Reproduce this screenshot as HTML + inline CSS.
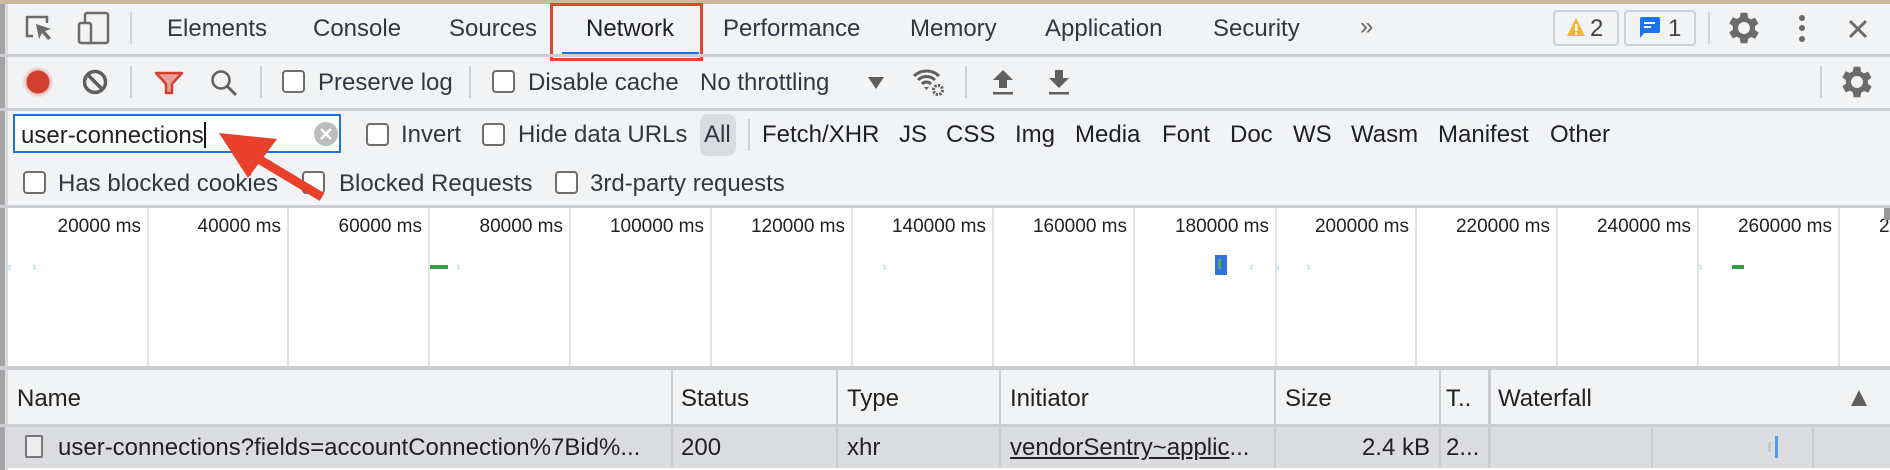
<!DOCTYPE html>
<html><head><meta charset="utf-8"><style>
*{margin:0;padding:0;box-sizing:border-box}
body{width:1890px;height:470px;overflow:hidden;background:#f1f3f4;font-family:"Liberation Sans",Arial,sans-serif;color:#303942;position:relative}
.a{position:absolute;white-space:nowrap}
.t{font-size:24px;line-height:24px}
.s{font-size:19px;line-height:19px;color:#222}
.hl{position:absolute;height:3px;background:#cbcdd1;left:0;width:1890px}
.vs{position:absolute;width:2px;background:#cfd1d4}
.cb{position:absolute;width:23px;height:23px;border:2px solid #6e6e6e;border-radius:4px;background:#fff}
.gl{position:absolute;top:208px;height:160px;width:2px;background:#e3e3e3}
.cl{position:absolute;width:2px;background:#cbcdd1}
</style></head><body>
<div class="a" style="left:0;top:0;width:1890px;height:4px;background:#cdb99e"></div>
<div class="a" style="left:0;top:4px;width:5px;height:466px;background:#a3a3a3"></div>
<div class="a" style="left:5px;top:4px;width:3px;height:466px;background:#d8dadd"></div>

<svg class="a" style="left:24px;top:14px" width="32" height="30" viewBox="0 0 32 30"><path d="M9 22H3V3h20v6" fill="none" stroke="#6b6b6b" stroke-width="2.5"/><path d="M12 10l15 5-6 2 6 7-3 2-6-7-3 6z" fill="#6b6b6b"/></svg>
<svg class="a" style="left:77px;top:11px" width="34" height="34" viewBox="0 0 34 34"><rect x="8" y="2" width="23" height="30" rx="2" fill="none" stroke="#6b6b6b" stroke-width="2.5"/><rect x="2" y="12" width="12" height="20" rx="2" fill="#f1f3f4" stroke="#6b6b6b" stroke-width="2.5"/></svg>
<div class="vs" style="left:130px;top:12px;height:32px"></div>
<div class="a t" style="left:167px;top:17px">Elements</div>
<div class="a t" style="left:313px;top:17px">Console</div>
<div class="a t" style="left:449px;top:17px">Sources</div>
<div class="a t" style="left:586px;top:17px;color:#202124">Network</div>
<div class="a" style="left:562px;top:52px;width:137px;height:3px;background:#1a73e8"></div>
<div class="a" style="left:550px;top:3px;width:153px;height:58px;border:3px solid #e8432d"></div>
<div class="a t" style="left:723px;top:17px">Performance</div>
<div class="a t" style="left:910px;top:17px">Memory</div>
<div class="a t" style="left:1045px;top:17px">Application</div>
<div class="a t" style="left:1213px;top:17px">Security</div>
<div class="a t" style="left:1360px;top:15px;color:#666">»</div>
<div class="a" style="left:1553px;top:10px;width:66px;height:36px;border:2px solid #cfd1d4;border-radius:4px"></div>
<svg class="a" style="left:1566px;top:17px" width="20" height="20" viewBox="0 0 20 20"><path d="M10 1L19 19H1z" fill="#f2b531"/><rect x="9" y="7" width="2.4" height="7" fill="#fff"/><rect x="9" y="15.5" width="2.4" height="2.2" fill="#fff"/></svg>
<div class="a t" style="left:1590px;top:17px;color:#444">2</div>
<div class="a" style="left:1624px;top:10px;width:72px;height:36px;border:2px solid #cfd1d4;border-radius:4px"></div>
<svg class="a" style="left:1638px;top:15px" width="24" height="25" viewBox="0 0 24 25"><path d="M4 2h16a2 2 0 0 1 2 2v12a2 2 0 0 1-2 2H6l-4 5V4a2 2 0 0 1 2-2z" fill="#1a73e8"/><rect x="6" y="7" width="11" height="2" fill="#fff"/><rect x="6" y="11" width="7" height="2" fill="#fff"/></svg>
<div class="a t" style="left:1668px;top:17px;color:#444">1</div>
<div class="vs" style="left:1708px;top:12px;height:32px"></div>
<svg class="a" style="left:1727px;top:11px" width="34" height="34" viewBox="2 2 20 20"><path fill="#6b6b6b" d="M19.4 13a7.5 7.5 0 0 0 0-2l2.1-1.6-2-3.5-2.5 1a7 7 0 0 0-1.7-1L15 3h-4l-.4 2.7a7 7 0 0 0-1.7 1l-2.5-1-2 3.5L6.5 11a7.5 7.5 0 0 0 0 2l-2.1 1.6 2 3.5 2.5-1a7 7 0 0 0 1.7 1L11 21h4l.4-2.7a7 7 0 0 0 1.7-1l2.5 1 2-3.5zM13 15.5a3.5 3.5 0 1 1 0-7 3.5 3.5 0 0 1 0 7z" transform="translate(-1 0)"/></svg>
<svg class="a" style="left:1796px;top:14px" width="12" height="30"><circle cx="6" cy="4" r="3" fill="#6b6b6b"/><circle cx="6" cy="14" r="3" fill="#6b6b6b"/><circle cx="6" cy="25" r="3" fill="#6b6b6b"/></svg>
<svg class="a" style="left:1848px;top:19px" width="20" height="20"><path d="M2 2L18 18M18 2L2 18" stroke="#6b6b6b" stroke-width="3"/></svg>
<div class="hl" style="top:54px"></div>

<div class="a" style="left:22px;top:66px;width:32px;height:32px;border-radius:50%;background:radial-gradient(circle,#d33f2f 0 11px,rgba(211,63,47,.25) 12px,rgba(211,63,47,0) 16px)"></div>
<svg class="a" style="left:82px;top:69px" width="26" height="26"><circle cx="13" cy="13" r="10.5" fill="none" stroke="#5f5f5f" stroke-width="3.5"/><path d="M6 6L20 20" stroke="#5f5f5f" stroke-width="3.5"/></svg>
<div class="vs" style="left:130px;top:66px;height:32px"></div>
<svg class="a" style="left:154px;top:71px" width="30" height="24"><path d="M2 2h26L18 13v9h-6v-9z" fill="#e8a19a" stroke="#d33f2f" stroke-width="2.5" stroke-linejoin="round"/></svg>
<svg class="a" style="left:209px;top:68px" width="30" height="30"><circle cx="12" cy="12" r="8.5" fill="none" stroke="#5f5f5f" stroke-width="2.5"/><path d="M18 18l9 9" stroke="#5f5f5f" stroke-width="2.8"/></svg>
<div class="vs" style="left:260px;top:66px;height:32px"></div>
<div class="cb" style="left:282px;top:70px"></div>
<div class="a t" style="left:318px;top:71px">Preserve log</div>
<div class="vs" style="left:469px;top:66px;height:32px"></div>
<div class="cb" style="left:492px;top:70px"></div>
<div class="a t" style="left:528px;top:71px">Disable cache</div>
<div class="a t" style="left:700px;top:71px">No throttling</div>
<svg class="a" style="left:867px;top:76px" width="18" height="14"><path d="M1 1h16L9 13z" fill="#5f5f5f"/></svg>
<svg class="a" style="left:912px;top:67px" width="34" height="30" viewBox="0 0 34 30"><path d="M2 9a18 18 0 0 1 25 0M6 13a12 12 0 0 1 17 0M10 17a6 6 0 0 1 9 0" fill="none" stroke="#5f5f5f" stroke-width="3"/><path d="M12 20h5l-2.5 3z" fill="#5f5f5f"/><circle cx="26" cy="23" r="4.5" fill="none" stroke="#5f5f5f" stroke-width="3" stroke-dasharray="2.2 1.3"/></svg>
<div class="vs" style="left:965px;top:66px;height:32px"></div>
<svg class="a" style="left:991px;top:68px" width="24" height="28"><path d="M12 2L22 12h-6v8H8v-8H2z" fill="#5f5f5f"/><rect x="2" y="24" width="20" height="2.5" fill="#5f5f5f"/></svg>
<svg class="a" style="left:1047px;top:68px" width="24" height="28"><path d="M12 20L22 10h-6V2H8v8H2z" fill="#5f5f5f"/><rect x="2" y="24" width="20" height="2.5" fill="#5f5f5f"/></svg>
<div class="vs" style="left:1820px;top:66px;height:32px"></div>
<svg class="a" style="left:1840px;top:65px" width="34" height="34" viewBox="2 2 20 20"><path fill="#6b6b6b" d="M19.4 13a7.5 7.5 0 0 0 0-2l2.1-1.6-2-3.5-2.5 1a7 7 0 0 0-1.7-1L15 3h-4l-.4 2.7a7 7 0 0 0-1.7 1l-2.5-1-2 3.5L6.5 11a7.5 7.5 0 0 0 0 2l-2.1 1.6 2 3.5 2.5-1a7 7 0 0 0 1.7 1L11 21h4l.4-2.7a7 7 0 0 0 1.7-1l2.5 1 2-3.5zM13 15.5a3.5 3.5 0 1 1 0-7 3.5 3.5 0 0 1 0 7z" transform="translate(-1 0)"/></svg>
<div class="hl" style="top:108px"></div>

<div class="a" style="left:13px;top:114px;width:328px;height:39px;border:2px solid #1a73e8;background:#fff"></div>
<div class="a t" style="left:21px;top:122px;color:#222">user-connections<span style="display:inline-block;width:2px;height:26px;background:#111;vertical-align:-5px"></span></div>
<svg class="a" style="left:313px;top:121px" width="26" height="26"><circle cx="13" cy="13" r="12" fill="#bdbdbd"/><path d="M8 8l10 10M18 8L8 18" stroke="#fff" stroke-width="2.6"/></svg>
<div class="cb" style="left:366px;top:123px"></div>
<div class="a t" style="left:401px;top:123px">Invert</div>
<div class="cb" style="left:482px;top:123px"></div>
<div class="a t" style="left:518px;top:123px">Hide data URLs</div>
<div class="a" style="left:700px;top:114px;width:36px;height:42px;border-radius:8px;background:#dadce0"></div>
<div class="a t" style="left:704px;top:123px">All</div>
<div class="vs" style="left:748px;top:119px;height:32px"></div>
<div class="a t" style="left:762px;top:123px;color:#202124">Fetch/XHR</div>
<div class="a t" style="left:899px;top:123px;color:#202124">JS</div>
<div class="a t" style="left:946px;top:123px;color:#202124">CSS</div>
<div class="a t" style="left:1015px;top:123px;color:#202124">Img</div>
<div class="a t" style="left:1075px;top:123px;color:#202124">Media</div>
<div class="a t" style="left:1162px;top:123px;color:#202124">Font</div>
<div class="a t" style="left:1230px;top:123px;color:#202124">Doc</div>
<div class="a t" style="left:1293px;top:123px;color:#202124">WS</div>
<div class="a t" style="left:1351px;top:123px;color:#202124">Wasm</div>
<div class="a t" style="left:1438px;top:123px;color:#202124">Manifest</div>
<div class="a t" style="left:1550px;top:123px;color:#202124">Other</div>

<div class="cb" style="left:23px;top:171px"></div>
<div class="a t" style="left:58px;top:172px">Has blocked cookies</div>
<div class="cb" style="left:302px;top:171px"></div>
<div class="a t" style="left:339px;top:172px">Blocked Requests</div>
<div class="cb" style="left:555px;top:171px"></div>
<div class="a t" style="left:590px;top:172px">3rd-party requests</div>
<div class="hl" style="top:205px"></div>

<div class="a" style="left:8px;top:208px;width:1882px;height:160px;background:#fff"></div>
<div class="gl" style="left:147px"></div><div class="gl" style="left:287px"></div><div class="gl" style="left:428px"></div><div class="gl" style="left:569px"></div><div class="gl" style="left:710px"></div><div class="gl" style="left:851px"></div><div class="gl" style="left:992px"></div><div class="gl" style="left:1133px"></div><div class="gl" style="left:1275px"></div><div class="gl" style="left:1415px"></div><div class="gl" style="left:1556px"></div><div class="gl" style="left:1697px"></div><div class="gl" style="left:1838px"></div>
<div class="a s" style="right:1749px;top:217px">20000 ms</div>
<div class="a s" style="right:1609px;top:217px">40000 ms</div>
<div class="a s" style="right:1468px;top:217px">60000 ms</div>
<div class="a s" style="right:1327px;top:217px">80000 ms</div>
<div class="a s" style="right:1186px;top:217px">100000 ms</div>
<div class="a s" style="right:1045px;top:217px">120000 ms</div>
<div class="a s" style="right:904px;top:217px">140000 ms</div>
<div class="a s" style="right:763px;top:217px">160000 ms</div>
<div class="a s" style="right:621px;top:217px">180000 ms</div>
<div class="a s" style="right:481px;top:217px">200000 ms</div>
<div class="a s" style="right:340px;top:217px">220000 ms</div>
<div class="a s" style="right:199px;top:217px">240000 ms</div>
<div class="a s" style="right:58px;top:217px">260000 ms</div>
<div class="a s" style="left:1879px;top:217px">2</div>
<div class="a" style="left:1884px;top:208px;width:6px;height:12px;background:#999"></div>
<div class="a" style="left:8px;top:265px;width:3px;height:5px;background:#cdeef0"></div>
<div class="a" style="left:33px;top:265px;width:3px;height:5px;background:#cdeef0"></div>
<div class="a" style="left:430px;top:265px;width:18px;height:4px;background:#3a9d46"></div>
<div class="a" style="left:457px;top:265px;width:3px;height:5px;background:#cdeef0"></div>
<div class="a" style="left:883px;top:265px;width:3px;height:5px;background:#cdeef0"></div>
<div class="a" style="left:1215px;top:255px;width:12px;height:20px;background:#2f72de"></div>
<div class="a" style="left:1218px;top:259px;width:3px;height:10px;background:#4caf50"></div>
<div class="a" style="left:1250px;top:265px;width:3px;height:5px;background:#cdeef0"></div>
<div class="a" style="left:1276px;top:265px;width:3px;height:5px;background:#cdeef0"></div>
<div class="a" style="left:1307px;top:265px;width:3px;height:5px;background:#cdeef0"></div>
<div class="a" style="left:1699px;top:265px;width:3px;height:5px;background:#cdeef0"></div>
<div class="a" style="left:1732px;top:265px;width:12px;height:4px;background:#3a9d46"></div>
<div class="hl" style="top:366px;height:4px"></div>

<div class="a" style="left:8px;top:370px;width:1882px;height:54px;background:#f1f3f4"></div>
<div class="cl" style="left:671px;top:370px;height:100px"></div>
<div class="cl" style="left:836px;top:370px;height:100px"></div>
<div class="cl" style="left:999px;top:370px;height:100px"></div>
<div class="cl" style="left:1274px;top:370px;height:100px"></div>
<div class="cl" style="left:1439px;top:370px;height:100px"></div>
<div class="cl" style="left:1488px;top:370px;height:100px;width:3px"></div>
<div class="a t" style="left:17px;top:387px;color:#222">Name</div>
<div class="a t" style="left:681px;top:387px;color:#222">Status</div>
<div class="a t" style="left:847px;top:387px;color:#222">Type</div>
<div class="a t" style="left:1010px;top:387px;color:#222">Initiator</div>
<div class="a t" style="left:1285px;top:387px;color:#222">Size</div>
<div class="a t" style="left:1446px;top:387px;color:#222">T..</div>
<div class="a t" style="left:1498px;top:387px;color:#222">Waterfall</div>
<svg class="a" style="left:1850px;top:389px" width="18" height="18"><path d="M9 1L17 17H1z" fill="#5f5f5f"/></svg>
<div class="hl" style="top:424px"></div>

<div class="a" style="left:8px;top:427px;width:1882px;height:41px;background:#dadce0"></div>
<div class="cl" style="left:671px;top:427px;height:43px"></div>
<div class="cl" style="left:836px;top:427px;height:43px"></div>
<div class="cl" style="left:999px;top:427px;height:43px"></div>
<div class="cl" style="left:1274px;top:427px;height:43px"></div>
<div class="cl" style="left:1439px;top:427px;height:43px"></div>
<div class="cl" style="left:1488px;top:427px;height:43px;width:3px"></div>
<div class="cl" style="left:1651px;top:427px;height:41px"></div>
<div class="cl" style="left:1812px;top:427px;height:41px"></div>
<div class="a" style="left:25px;top:435px;width:18px;height:23px;border:2px solid #777;border-radius:2px;background:#ececec"></div>
<div class="a t" style="left:58px;top:436px;color:#222">user-connections?fields=accountConnection%7Bid%...</div>
<div class="a t" style="left:681px;top:436px;color:#222">200</div>
<div class="a t" style="left:847px;top:436px;color:#222">xhr</div>
<div class="a t" style="left:1010px;top:436px;color:#222"><span style="text-decoration:underline">vendorSentry~applic</span>...</div>
<div class="a t" style="right:460px;top:436px;color:#222">2.4 kB</div>
<div class="a t" style="left:1446px;top:436px;color:#222">2...</div>
<div class="a" style="left:1768px;top:442px;width:3px;height:10px;background:#c8c8c8"></div>
<div class="a" style="left:1775px;top:436px;width:3px;height:22px;background:#4a9eea"></div>
<div class="a" style="left:8px;top:468px;width:1882px;height:2px;background:#fff"></div>

<svg class="a" style="left:0;top:0" width="400" height="220"><path d="M322 197L252 155" stroke="#e8402a" stroke-width="9"/><path d="M219 133L277 139L248 178z" fill="#e8402a"/></svg>
</body></html>
